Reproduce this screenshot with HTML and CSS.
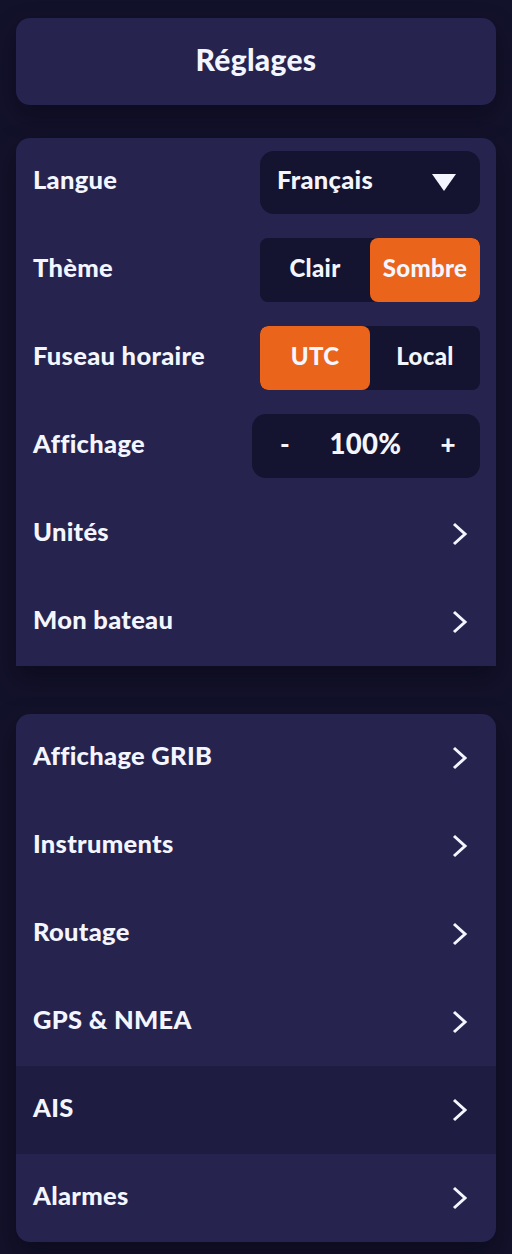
FILE: index.html
```
<!DOCTYPE html>
<html lang="fr">
<head>
<meta charset="utf-8">
<link rel="stylesheet" href="styles.css">
</head>
<body>
<div class="page">
  <header class="title-card"><h1>Réglages</h1></header>

  <section class="card card-top">
    <div class="row">
      <span class="label">Langue</span>
      <div class="select">
        <span>Français</span>
        <svg class="tri" width="24" height="17" viewBox="0 0 24 17"><polygon points="0,0 24,0 12,17" fill="#f4f6ff"/></svg>
      </div>
    </div>
    <div class="row">
      <span class="label">Thème</span>
      <div class="seg">
        <span class="opt">Clair</span>
        <span class="opt on">Sombre</span>
      </div>
    </div>
    <div class="row">
      <span class="label">Fuseau horaire</span>
      <div class="seg">
        <span class="opt on">UTC</span>
        <span class="opt">Local</span>
      </div>
    </div>
    <div class="row">
      <span class="label">Affichage</span>
      <div class="stepper">
        <span class="step">-</span>
        <span class="val">100%</span>
        <span class="step">+</span>
      </div>
    </div>
    <div class="row">
      <span class="label">Unités</span>
      <svg class="chev" width="16" height="24" viewBox="0 0 16 24"><polyline points="2,2 13,12 2,22" fill="none" stroke="#f4f6ff" stroke-width="3"/></svg>
    </div>
    <div class="row">
      <span class="label">Mon bateau</span>
      <svg class="chev" width="16" height="24" viewBox="0 0 16 24"><polyline points="2,2 13,12 2,22" fill="none" stroke="#f4f6ff" stroke-width="3"/></svg>
    </div>
  </section>

  <section class="card card-bottom">
    <div class="row">
      <span class="label">Affichage GRIB</span>
      <svg class="chev" width="16" height="24" viewBox="0 0 16 24"><polyline points="2,2 13,12 2,22" fill="none" stroke="#f4f6ff" stroke-width="3"/></svg>
    </div>
    <div class="row">
      <span class="label">Instruments</span>
      <svg class="chev" width="16" height="24" viewBox="0 0 16 24"><polyline points="2,2 13,12 2,22" fill="none" stroke="#f4f6ff" stroke-width="3"/></svg>
    </div>
    <div class="row">
      <span class="label">Routage</span>
      <svg class="chev" width="16" height="24" viewBox="0 0 16 24"><polyline points="2,2 13,12 2,22" fill="none" stroke="#f4f6ff" stroke-width="3"/></svg>
    </div>
    <div class="row">
      <span class="label">GPS &amp; NMEA</span>
      <svg class="chev" width="16" height="24" viewBox="0 0 16 24"><polyline points="2,2 13,12 2,22" fill="none" stroke="#f4f6ff" stroke-width="3"/></svg>
    </div>
    <div class="row active">
      <span class="label">AIS</span>
      <svg class="chev" width="16" height="24" viewBox="0 0 16 24"><polyline points="2,2 13,12 2,22" fill="none" stroke="#f4f6ff" stroke-width="3"/></svg>
    </div>
    <div class="row">
      <span class="label">Alarmes</span>
      <svg class="chev" width="16" height="24" viewBox="0 0 16 24"><polyline points="2,2 13,12 2,22" fill="none" stroke="#f4f6ff" stroke-width="3"/></svg>
    </div>
  </section>
</div>
</body>
</html>
```

FILE: styles.css
```
* { box-sizing: border-box; }
html, body { margin: 0; padding: 0; background: #13122b; }
body {
  font-family: Lato, "Open Sans", sans-serif;
  font-weight: 900;
  color: #f4f6ff;
  letter-spacing: 0.3px;
}
.page {
  padding: 18px 16px 12px;
  display: flex;
  flex-direction: column;
}
.title-card {
  height: 87px;
  background: #26234f;
  border-radius: 14px;
  display: flex;
  align-items: center;
  justify-content: center;
  box-shadow: 0 10px 24px rgba(5, 5, 18, 0.45);
}
.title-card h1 {
  margin: 0 0 5px;
  font-size: 30px;
  font-weight: 900;
  line-height: 1;
}
.card {
  background: #26234f;
  box-shadow: 0 12px 24px rgba(5, 5, 18, 0.5);
  overflow: hidden;
}
.card-top {
  margin-top: 33px;
  border-radius: 14px 14px 0 0;
}
.card-bottom {
  margin-top: 48px;
  border-radius: 14px;
}
.row {
  height: 88px;
  display: flex;
  align-items: center;
  justify-content: space-between;
  padding: 0 16px 0 17px;
}
.row.active { background: #1e1c40; }
.label { font-size: 25.5px; line-height: 1; margin-bottom: 5px; }
.chev { margin-right: 12px; }
.select {
  width: 220px;
  height: 63px;
  background: #141330;
  border-radius: 14px;
  display: flex;
  align-items: center;
  justify-content: space-between;
  padding: 0 24px 4px 17px;
  font-size: 25.5px;
  line-height: 1;
}
.tri { margin-top: 4px; }
.seg {
  width: 220px;
  height: 64px;
  background: #141330;
  border-radius: 8px;
  display: flex;
  overflow: hidden;
}
.opt {
  flex: 1;
  display: flex;
  align-items: center;
  justify-content: center;
  font-size: 24px;
  line-height: 1;
  padding-bottom: 4px;
  border-radius: 8px;
}
.opt.on { background: #ea641c; }
.stepper {
  width: 228px;
  height: 64px;
  background: #141330;
  border-radius: 14px;
  display: flex;
  align-items: center;
  justify-content: space-between;
  padding: 0 24px 4px 28px;
  font-size: 26px;
  line-height: 1;
}
.val { font-size: 27.5px; }
```
